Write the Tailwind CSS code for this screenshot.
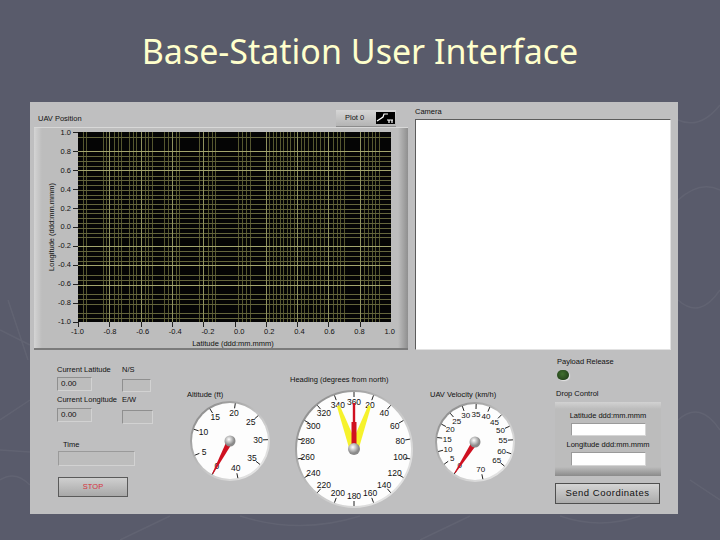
<!DOCTYPE html>
<html lang="en">
<head>
<meta charset="UTF-8" />
<title>Base-Station User Interface</title>
<script src="https://cdn.jsdelivr.net/npm/@tailwindcss/browser@4"></script>
</head>
<body class="relative w-[720px] h-[540px] overflow-hidden bg-[#595b6b] font-['Liberation_Sans',sans-serif] text-[#111]">
	<!-- Faint slide watermark -->
	<svg class="absolute inset-0 pointer-events-none" width="720" height="540" fill="none" stroke="#ffffff" stroke-opacity="0.05" stroke-width="1.5">
		<path d="M0 330 L30 345 M8 300 L28 360 M0 420 L30 400 M0 480 Q15 470 30 485 M0 450 L30 452" />
		<path d="M678 120 Q700 130 720 105 M678 200 Q700 180 720 190 M678 300 Q700 320 720 290 M678 420 Q700 400 720 430 M690 480 L720 500" />
		<path d="M120 540 L170 516 M240 516 Q300 535 360 516 M420 540 L470 516 M560 516 Q600 530 640 516" />
	</svg>

	<!-- Slide title -->
	<h1 class="relative h-[102px] flex items-center justify-center font-['Noto_Sans',sans-serif] text-[34px] text-[#ffffcc]">Base-Station User Interface</h1>

	<!-- LabVIEW front panel -->
	<div class="relative ml-[30px] w-[648px] h-[412px] bg-[#bfbfc0] text-[7.5px] flex flex-col">
		<div class="h-[248px] flex">
			<!-- Graph -->
			<div class="w-[374px] ml-[4px] flex flex-col">
				<div class="h-[25px] flex justify-between pr-[12px]">
					<span class="ml-[4px] mt-[12px] leading-[10px] whitespace-nowrap">UAV Position</span>
					<div class="mt-[8px] w-[60px] h-[17px] flex items-center bg-[linear-gradient(#d6d6d6,#b4b4b4)] border-b border-[#8c8c8c]">
						<span class="ml-[9px] w-[31px]">Plot 0</span>
						<svg width="19" height="12" class="bg-black" fill="none" stroke="#ffffff" stroke-width="1.2">
							<path d="M1 9 L7 5 L8 2 L12 2 M11 8 L17 8 M13 8 L13 11 M16 8 L16 11" />
						</svg>
					</div>
				</div>
				<div class="h-[223px] flex flex-col bg-[linear-gradient(90deg,#d4d4d4,#bdbdbd_8px,#bdbdbd_calc(100%-10px),#8f8f8f)] border-t border-[#d8d8d8] border-b-2 border-b-[#7b7b7b]">
					<div class="flex mt-[4px]">
						<div class="w-[13px] ml-[11px] h-[190px] flex items-center justify-center">
							<span class="[writing-mode:vertical-rl] rotate-180 whitespace-nowrap">Longitude (ddd:mm.mmm)</span>
						</div>
						<div class="w-[15px] pr-[2px] h-[190px] flex flex-col justify-between items-end leading-[1px]">
							<span>1.0</span><span>0.8</span><span>0.6</span><span>0.4</span><span>0.2</span><span>0.0</span><span>-0.2</span><span>-0.4</span><span>-0.6</span><span>-0.8</span><span>-1.0</span>
						</div>
						<svg id="plot" width="318" height="195"></svg>
					</div>
					<div class="ml-[37px] w-[324px] flex justify-between leading-[10px]">
						<span>-1.0</span><span>-0.8</span><span>-0.6</span><span>-0.4</span><span>-0.2</span><span>0.0</span><span>0.2</span><span>0.4</span><span>0.6</span><span>0.8</span><span>1.0</span>
					</div>
					<div class="ml-[37px] w-[324px] mt-[2px] text-center leading-[10px]">Latitude (ddd:mm.mmm)</div>
				</div>
			</div>
			<!-- Camera -->
			<div class="ml-[7px] mr-[7px] flex-1 flex flex-col">
				<span class="mt-[5px] h-[12px] leading-[9px]">Camera</span>
				<div class="flex-1 bg-white border border-[#5c5c5c] border-b-[#e2e2e2] border-r-[#e2e2e2]"></div>
			</div>
		</div>

		<div class="flex-1 flex items-start">
			<!-- Readouts -->
			<div class="ml-[27px] mt-[15px] w-[100px] flex flex-col">
				<div class="flex">
					<div class="w-[65px]">
						<div class="h-[12px] leading-[10px] whitespace-nowrap">Current Latitude</div>
						<div class="w-[35px] h-[14px] pl-[3px] leading-[12px] text-[8px] bg-[#bdbdbd] border border-[#8f8f8f] border-b-[#d2d2d2] border-r-[#d2d2d2]">0.00</div>
					</div>
					<div>
						<div class="h-[14px] leading-[10px]">N/S</div>
						<div class="w-[29px] h-[13px] bg-[#bdbdbd] border border-[#8f8f8f] border-b-[#d2d2d2] border-r-[#d2d2d2]"></div>
					</div>
				</div>
				<div class="flex mt-[3px]">
					<div class="w-[65px]">
						<div class="h-[13px] leading-[10px] whitespace-nowrap">Current Longitude</div>
						<div class="w-[35px] h-[14px] pl-[3px] leading-[12px] text-[8px] bg-[#bdbdbd] border border-[#8f8f8f] border-b-[#d2d2d2] border-r-[#d2d2d2]">0.00</div>
					</div>
					<div>
						<div class="h-[15px] leading-[10px]">E/W</div>
						<div class="w-[31px] h-[14px] bg-[#bdbdbd] border border-[#8f8f8f] border-b-[#d2d2d2] border-r-[#d2d2d2]"></div>
					</div>
				</div>
				<div class="ml-[6px] mt-[16px] h-[11px] leading-[10px]">Time</div>
				<div class="ml-[1px] w-[77px] h-[15px] bg-[#bdbdbd] border border-[#9a9a9a] border-b-[#d2d2d2] border-r-[#d2d2d2]"></div>
				<div class="ml-[1px] mt-[11px] w-[70px] h-[20px] flex items-center justify-center text-[#d6303c] bg-[linear-gradient(#cfcfcf,#a8a8a8)] border border-[#5a5a5a]">STOP</div>
			</div>

			<!-- Altitude -->
			<div class="ml-[31px] mt-[40px] w-[84px]">
				<div class="ml-[-1px] h-[9px] leading-[9px]">Altitude (ft)</div>
				<svg id="altitude" width="84" height="84"></svg>
			</div>

			<!-- Heading -->
			<div class="ml-[20px] mt-[25px] w-[124px]">
				<div class="ml-[-2px] h-[12px] leading-[10px] whitespace-nowrap">Heading (degrees from north)</div>
				<svg id="heading" width="124" height="124"></svg>
			</div>

			<!-- Velocity -->
			<div class="ml-[17px] mt-[40px] w-[84px]">
				<div class="ml-[-3px] h-[10px] leading-[9px] whitespace-nowrap">UAV Velocity (km/h)</div>
				<svg id="velocity" width="84" height="84"></svg>
			</div>

			<!-- Payload and drop control -->
			<div class="ml-[38px] mt-[7px] w-[106px] flex flex-col">
				<div class="ml-[2px] h-[11px] leading-[10px]">Payload Release</div>
				<div class="ml-[2px] mt-[2px] w-[12px] h-[10px] rounded-full bg-[radial-gradient(circle_at_45%_40%,#41702f,#1c3616)] shadow-[1px_1px_1px_#e4e4e4]"></div>
				<div class="ml-[1px] mt-[9px] h-[13px] leading-[10px]">Drop Control</div>
				<div class="h-[74px] flex flex-col items-center bg-[linear-gradient(#d2d2d2,#bcbcbc_7px,#bcbcbc_calc(100%-9px),#8a8a8a)]">
					<div class="mt-[9px] h-[12px] leading-[10px]">Latitude ddd:mm.mmm</div>
					<div class="w-[75px] h-[13px] bg-white border border-[#9a9a9a] border-b-[#d6d6d6] border-r-[#d6d6d6]"></div>
					<div class="mt-[4px] h-[12px] leading-[10px]">Longitude ddd:mm.mmm</div>
					<div class="w-[75px] h-[14px] bg-white border border-[#9a9a9a] border-b-[#d6d6d6] border-r-[#d6d6d6]"></div>
				</div>
				<div class="mt-[7px] w-[105px] h-[21px] flex items-center justify-center text-[9.5px] tracking-[0.5px] bg-[linear-gradient(#d4d4d4,#ababab)] border border-[#4f4f4f]">Send Coordinates</div>
			</div>
		</div>
	</div>

	<script>
		// Grid lines as read off the reference, in page pixels
		const minorX = [81.5,85,102,105,113,117,120,128,132,135,144,147,151,163,167,175,178,198,207,211,214,237,241,245,249,268,272,275,279,282,286,289,293,300,303,307,312,315,319,323,332,336,339,343,363,367,371,374,378];
		const majorX = [108,140,171,202,265,296,327,359];
		const minorY = [137,156,161,166,176,180,185,190,195,199,204,209,213,218,223,228,233,237,251,256,261,275,280,294,299,304,313,318];
		const majorY = [151,170,246,265,285];
		const ox = 72, oy = 132;   // svg origin on the page
		let plot = `<rect x="5" y="0" width="313" height="190" fill="#050505"/>`;
		const line = (x1, y1, x2, y2, c) => `<line x1="${x1}" y1="${y1}" x2="${x2}" y2="${y2}" stroke="${c}"/>`;
		minorX.forEach(x => plot += line(Math.round(x - ox) + .5, 0, Math.round(x - ox) + .5, 190, "#55562f"));
		minorY.forEach(y => plot += line(5, y - oy + .5, 318, y - oy + .5, "#64653c"));
		majorX.forEach(x => plot += line(x - ox + .5, 0, x - ox + .5, 190, "#8f915e"));
		majorY.forEach(y => plot += line(5, y - oy + .5, 318, y - oy + .5, "#a3a56e"));
		for (let i = 0; i <= 10; i++) {
			plot += line(0, 19 * i + .5, 5, 19 * i + .5, "#222");
			const tx = 5 + Math.round(31.3 * i) + .5;
			plot += line(tx, 190, tx, 195, "#222");
		}
		document.getElementById("plot").innerHTML = plot;

		// Dial: face, ticks, labels, then needles and hub on top
		function dial(id, size, r, labelR, fontSize, labels, angleOf, needles) {
			const c = size / 2;
			const pt = (a, d) => {
				const t = a * Math.PI / 180;
				return [c + Math.sin(t) * d, c - Math.cos(t) * d];
			};
			// offset a point sideways from the needle's axis
			const side = (a, d, w) => {
				const [x, y] = pt(a, d), t = a * Math.PI / 180;
				return `${(x + Math.cos(t) * w).toFixed(1)},${(y + Math.sin(t) * w).toFixed(1)}`;
			};
			let s = `<defs>
				<radialGradient id="${id}Hub" cx="40%" cy="35%"><stop offset="0" stop-color="#ffffff"/><stop offset="1" stop-color="#8a8a8a"/></radialGradient>
				<linearGradient id="${id}Rim" x1="0" y1="0" x2="1" y2="1"><stop offset="0" stop-color="#7d7d7d"/><stop offset=".5" stop-color="#c4c4c4"/><stop offset="1" stop-color="#f0f0f0"/></linearGradient>
			</defs>
			<circle cx="${c}" cy="${c}" r="${r + 2}" fill="url(#${id}Rim)"/>
			<circle cx="${c}" cy="${c}" r="${r}" fill="#fdfdfd"/>`;
			labels.forEach(v => {
				const a = angleOf(v);
				const [x1, y1] = pt(a, r - 5), [x2, y2] = pt(a, r);
				s += `<line x1="${x1}" y1="${y1}" x2="${x2}" y2="${y2}" stroke="#222" stroke-width="1"/>`;
				const [lx, ly] = pt(a, labelR);
				s += `<text x="${lx.toFixed(1)}" y="${ly.toFixed(1)}" dy=".36em" text-anchor="middle" font-size="${fontSize}" fill="#111" font-family="Liberation Sans">${v}</text>`;
			});
			needles.forEach(n => {
				const pts = [side(n.a, n.len, -n.tip), side(n.a, n.len, n.tip), side(n.a, n.from || 0, n.w), side(n.a, n.from || 0, -n.w)];
				s += `<polygon points="${pts.join(" ")}" fill="${n.color}"/>`;
			});
			s += `<circle cx="${c}" cy="${c}" r="${size > 100 ? 6 : 5.5}" fill="url(#${id}Hub)"/>`;
			document.getElementById(id).innerHTML = s;
		}

		const range = (from, to, step) => {
			const out = [];
			for (let v = from; v <= to; v += step) out.push(v);
			return out;
		};

		dial("altitude", 84, 38, 28, 8.5, range(0, 40, 5), v => -152 + 8 * v,
			[{ a: -152, len: 37, w: 3, tip: 0.5, color: "#cf1020" }]);
		dial("heading", 124, 57, 47, 8.5, range(0, 340, 20).map(v => v === 0 ? 360 : v), v => v,
			[{ a: -20, len: 46, w: 4.5, tip: 1.5, color: "#f6f22c" }, { a: 20, len: 46, w: 4.5, tip: 1.5, color: "#f6f22c" },
			 { a: 0, len: 46, w: 1.2, tip: 1.2, color: "#d01020" }, { a: 0, len: 27, w: 2.5, tip: 2.5, color: "#d01020" }]);
		dial("velocity", 84, 38, 28, 8, range(0, 70, 5), v => v === 70 ? 168 : -147 + 4.25 * v,
			[{ a: -147, len: 37, w: 3, tip: 0.5, color: "#cf1020" }]);
	</script>
</body>
</html>
